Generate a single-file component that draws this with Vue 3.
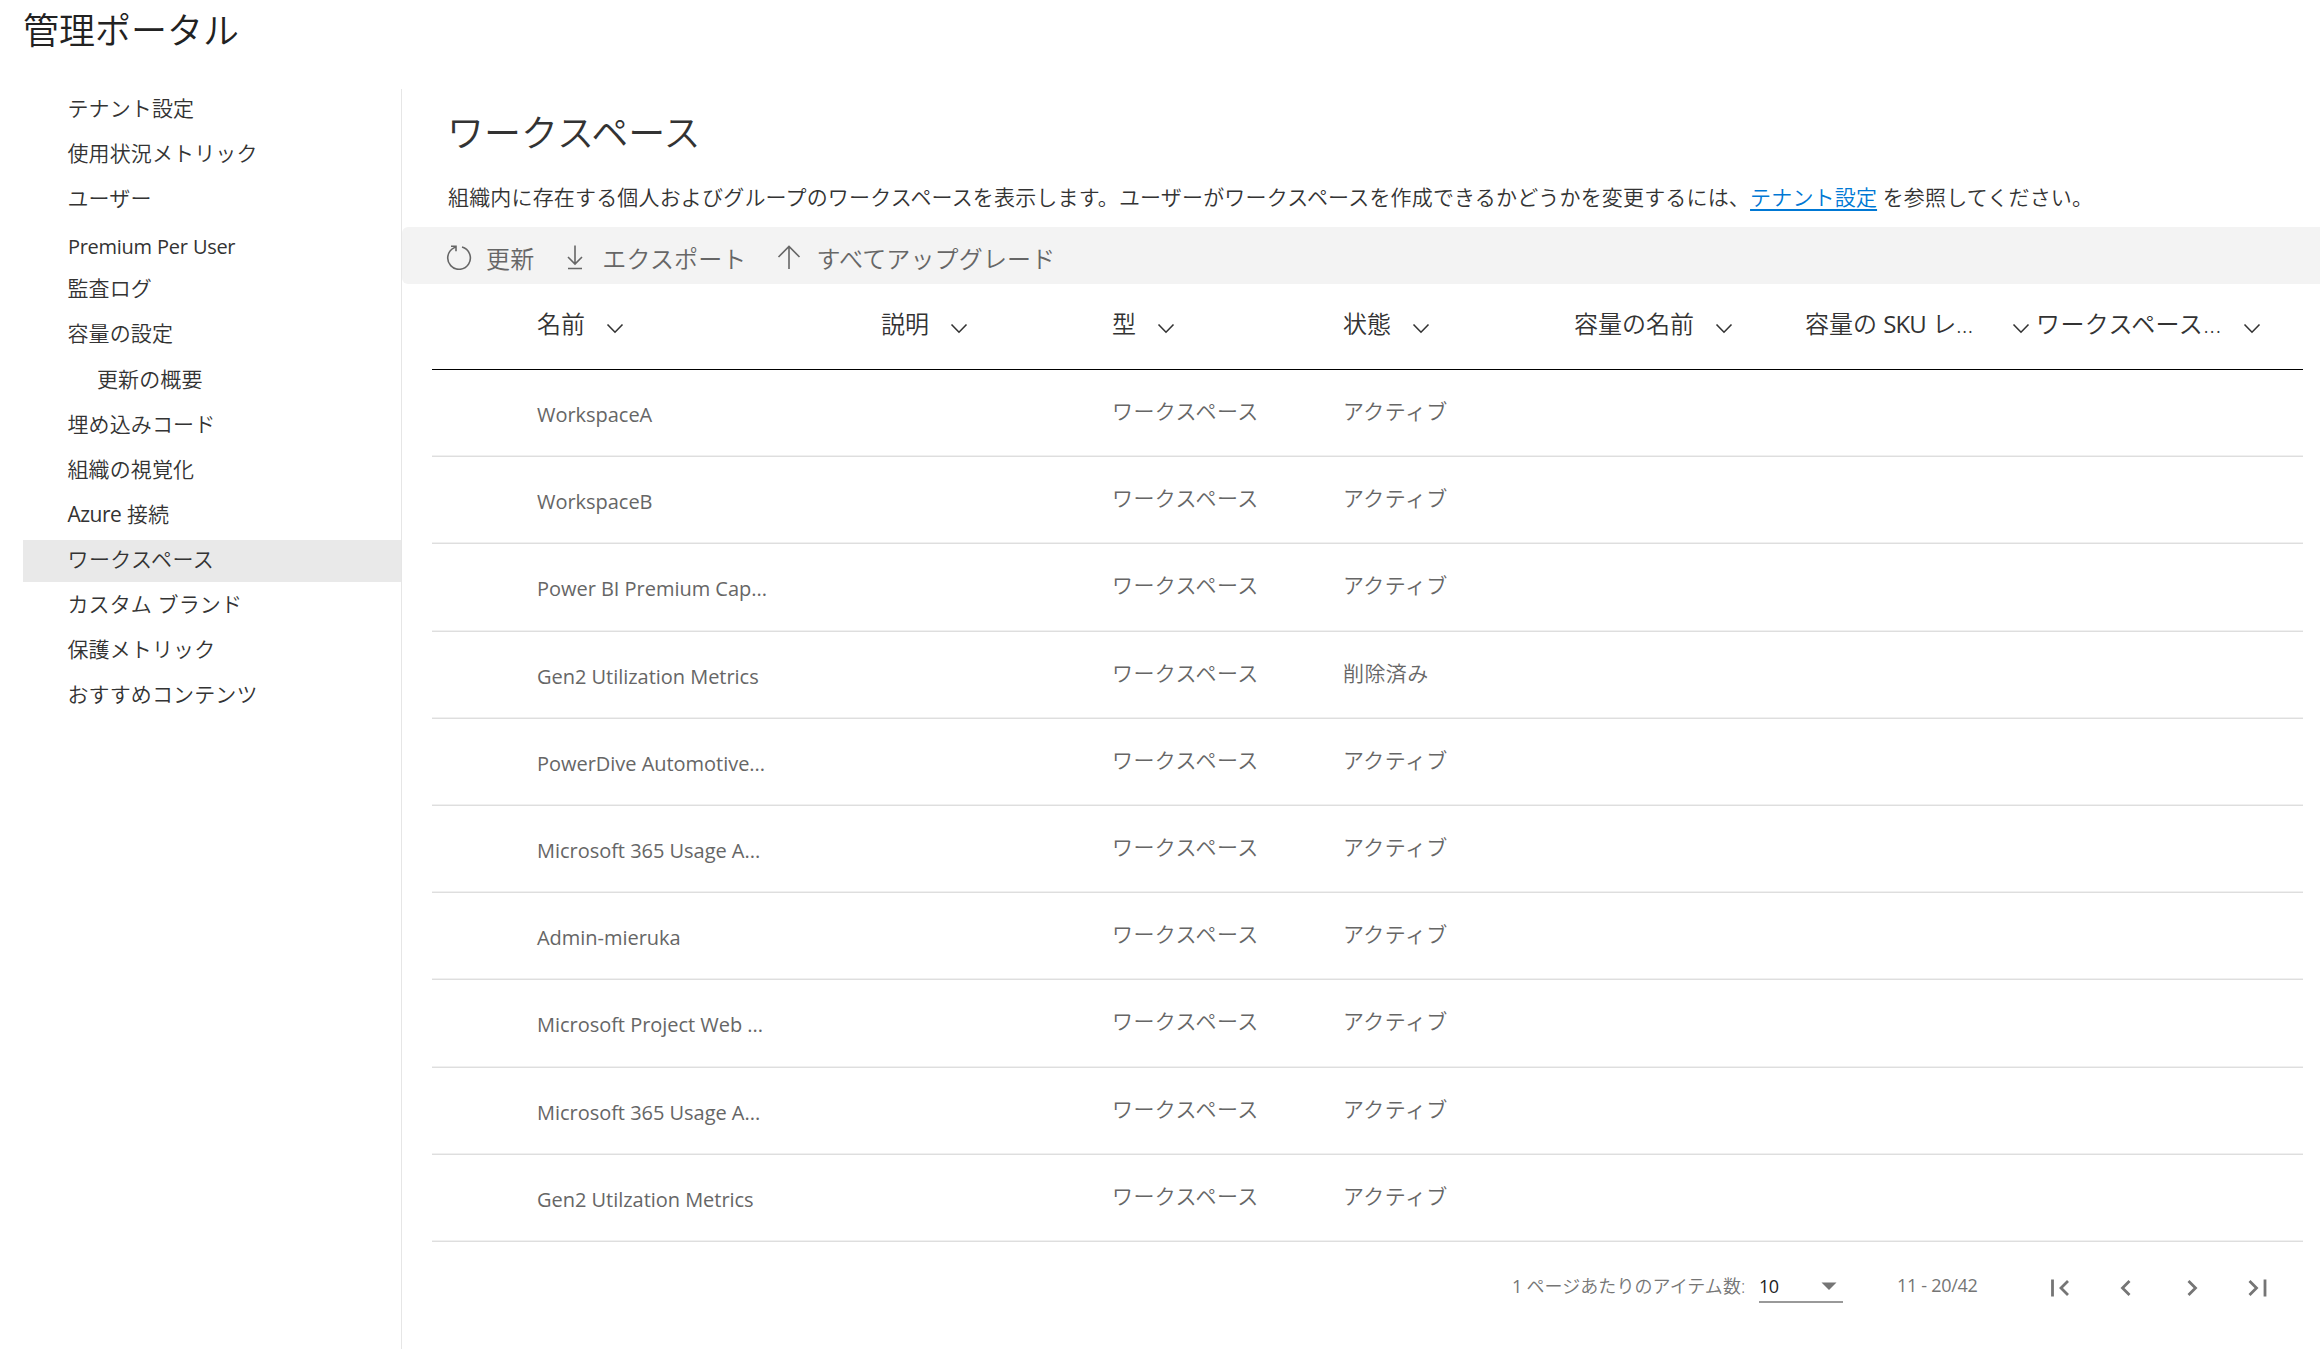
<script setup>
const nav = [
  { t: 'テナント設定' },
  { t: '使用状況メトリック' },
  { t: 'ユーザー' },
  { t: 'Premium Per User', latin: true },
  { t: '監査ログ' },
  { t: '容量の設定' },
  { t: '更新の概要', sub: true },
  { t: '埋め込みコード' },
  { t: '組織の視覚化' },
  { t: 'Azure 接続' },
  { t: 'ワークスペース', active: true },
  { t: 'カスタム ブランド' },
  { t: '保護メトリック' },
  { t: 'おすすめコンテンツ' },
]
const cols = ['名前', '説明', '型', '状態', '容量の名前', '容量の SKU レ...', 'ワークスペース...']
const rows = [
  'WorkspaceA', 'WorkspaceB', 'Power BI Premium Cap...', 'Gen2 Utilization Metrics',
  'PowerDive Automotive...', 'Microsoft 365 Usage A...', 'Admin-mieruka',
  'Microsoft Project Web ...', 'Microsoft 365 Usage A...', 'Gen2 Utilzation Metrics',
]
// Latin runs take a heavier weight than the Japanese text around them
const runs = (s) => s.split(/([A-Za-z0-9]+)/).filter(Boolean).map((t) => ({ t, en: /^[A-Za-z0-9]/.test(t) }))
</script>

<template>
  <div class="page">
    <h1>管理ポータル</h1>
    <div class="body">
      <nav>
        <a v-for="n in nav" :key="n.t" :class="{ sub: n.sub, active: n.active, latin: n.latin }"><span class="label"><span v-for="(r, k) in runs(n.t)" :key="k" :class="{ en: r.en }">{{ r.t }}</span></span></a>
      </nav>
      <main>
        <h2>ワークスペース</h2>
        <p class="desc">組織内に存在する個人およびグループのワークスペースを表示します。ユーザーがワークスペースを作成できるかどうかを変更するには、<a>テナント設定</a> を参照してください。</p>
        <div class="toolbar">
          <span class="tool t1"><svg width="26" height="26" viewBox="0 0 26 26"><path d="M16 3.100A11.300 11.300 0 1 1 8 3.900L10 2.200M5 2.200h5v5" /></svg>更新</span>
          <span class="tool t2"><svg width="20" height="26" viewBox="0 0 20 26"><path d="M10 1.500v18M3 13l7 7 7-7M3 24.500h14" /></svg>エクスポート</span>
          <span class="tool t3"><svg width="24" height="26" viewBox="0 0 24 26"><path d="M12 25V2.500M1.500 13L12 2.500l10.500 10.500" /></svg>すべてアップグレード</span>
        </div>
        <div class="table">
          <div class="row head">
            <div v-for="(c, i) in cols" :key="c" class="th" :class="'c' + i"><span class="label"><span v-for="(r, k) in runs(c)" :key="k" :class="{ en: r.en }">{{ r.t }}</span></span><svg width="18" height="12" viewBox="0 0 18 12"><path d="M1.500 1.500L9 9.200l7.500-7.700" /></svg></div>
          </div>
          <div v-for="(r, i) in rows" :key="i" class="row">
            <div class="c0 name">{{ r }}</div>
            <div class="c1"></div>
            <div class="c2">ワークスペース</div>
            <div class="c3">{{ i === 3 ? '削除済み' : 'アクティブ' }}</div>
          </div>
        </div>
        <footer>
          <span class="per"><span class="en">1</span> ページあたりのアイテム数:</span>
          <div class="select"><span class="en">10</span><svg width="16" height="9" viewBox="0 0 16 9"><path d="M0.500 0.500h15L8 8z" /></svg></div>
          <span class="range">11 - 20/42</span>
          <div class="pager">
            <svg width="20" height="20" viewBox="0 0 20 20"><path d="M2.500 1.500v17M18 3l-7 7 7 7" /></svg>
            <svg width="20" height="20" viewBox="0 0 20 20"><path d="M13.500 3l-7 7 7 7" /></svg>
            <svg width="20" height="20" viewBox="0 0 20 20"><path d="M6.500 3l7 7-7 7" /></svg>
            <svg width="20" height="20" viewBox="0 0 20 20"><path d="M17 1.500v17M1.500 3l7 7-7 7" /></svg>
          </div>
        </footer>
      </main>
    </div>
  </div>
</template>

<style>
body { background: #fff; overflow: hidden; }
</style>
<style scoped>
* { box-sizing: border-box; }
.page { width: 2320px; height: 1349px; overflow: hidden; font-family: "Open Sans", "Noto Sans CJK JP", sans-serif; font-weight: 350; color: #333; font-size: 21px; white-space: nowrap; display: flex; flex-direction: column; }
svg { flex: none; fill: none; stroke: currentColor; stroke-width: 1.600; }
.label { white-space: pre; }
.en { font-weight: 400; letter-spacing: -0.500px; }
h1 { margin: 0; height: 89px; padding-left: 23px; font: 350 36px/56px "Noto Sans CJK JP", sans-serif; color: #222; }
.body { display: flex; flex: 1; min-height: 0; }
nav { width: 402px; border-right: 1px solid #e6e6e6; padding-left: 23px; flex: none; letter-spacing: 0.120px; }
nav a { display: flex; align-items: center; height: 42px; margin-bottom: 3.100px; padding: 0 0 6px 44.500px; }
nav a.sub { padding-left: 74px; }
nav a.active { background: #e9e9e9; letter-spacing: 0.400px; }
nav a.latin { padding: 2px 0 0 45px; font-weight: 400; font-size: 20px; }
nav a.latin .en { letter-spacing: -0.300px; }
main { flex: 1; min-width: 0; display: flex; flex-direction: column; }
h2 { margin: 0; padding: 12px 0 0 45px; height: 80px; font: 350 37px/60px "Noto Sans CJK JP", sans-serif; }
.desc { margin: 0; height: 58px; padding-left: 46px; line-height: 56px; letter-spacing: 0.170px; }
.desc a { color: #0078d4; text-decoration: underline; text-underline-offset: 4px; text-decoration-thickness: 2px; }
.toolbar { height: 57px; background: #f3f3f3; border-radius: 6px 0 0 6px; display: flex; align-items: center; padding: 3px 0 0 44px; font-size: 24px; color: #666; letter-spacing: 0.150px; }
.tool { display: flex; align-items: center; }
.t1 svg { margin-right: 14px; }
.t2 { margin-left: 31px; }
.t2 svg { margin-right: 17px; }
.t3 { margin-left: 30px; }
.t3 svg { margin-right: 16px; }
.table { margin: 0 17px 0 30px; }
.row { display: flex; height: 87.200px; border-bottom: 1px solid #dedede; box-shadow: inset 0 -1px #f0f0f0; align-items: center; padding: 0 0 6px 105px; color: #666; }
.head { height: 86px; border-color: #000; box-shadow: none; color: #333; font-size: 24px; padding-bottom: 8px; }
.row > div { width: 231px; flex: none; }
.row > .c0 { width: 344px; }
.row > .c2, .row > .c3 { letter-spacing: 0.400px; }
.head > .c2, .head > .c3 { letter-spacing: 0; }
.row > .c6 { width: 260px; }
.name { padding-top: 9px; font-weight: 400; font-size: 20px; letter-spacing: -0.030px; }
.th { display: flex; align-items: center; }
.th .en { letter-spacing: -0.900px; }
.th svg { margin: 12px 0 0 21px; }
.th.c5 svg { margin-left: auto; margin-right: 6px; }
.th.c6 { letter-spacing: 0.400px; }
footer { display: flex; align-items: center; height: 88px; color: #757575; font-size: 18px; padding-left: 1110px; }
.per { width: 235px; padding-bottom: 1px; letter-spacing: 0.050px; }
.select { width: 84px; height: 34px; margin-left: 12px; border-bottom: 2px solid #999; display: flex; align-items: center; justify-content: space-between; padding: 3px 6px 0 0; color: #222; }
.select svg { fill: #757575; stroke: none; }
.range { width: 83px; margin-left: 54px; padding-bottom: 1px; font-weight: 400; letter-spacing: -0.300px; }
.pager { display: flex; gap: 46px; margin-left: 70px; padding-top: 4px; }
.pager svg { stroke-width: 2.800; }
</style>
